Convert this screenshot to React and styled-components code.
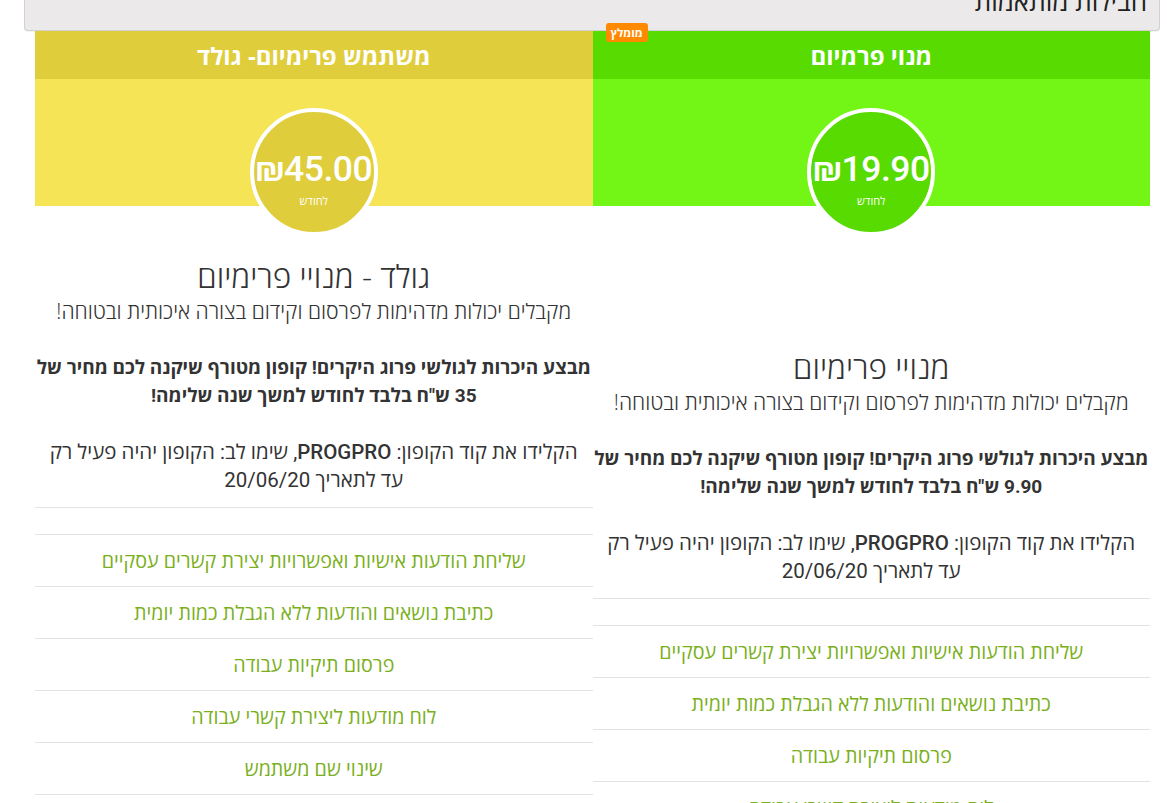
import React from "react";
import styled, { createGlobalStyle } from "styled-components";

const GlobalStyle = createGlobalStyle`
  html, body {
    margin: 0;
    padding: 0;
    overflow: hidden;
    background: #ffffff;
  }
  body {
    font-family: Roboto, "Open Sans", "Liberation Sans", sans-serif;
    color: #333333;
  }
`;

const Page = styled.div`
  direction: rtl;
  width: 1136px;
  margin-left: 24px;
`;

const TopBar = styled.div`
  height: 30px;
  background: #ebe9ea;
  border: 1px solid #d2d0d1;
  border-top: none;
  border-radius: 0 0 4px 4px;
  display: flex;
  align-items: flex-end;
  padding: 0 12px;
  overflow: hidden;
  box-shadow: 0 1px 1px rgba(0, 0, 0, 0.05);
`;

const PageTitle = styled.h2`
  margin: 0 0 17px;
  font-family: "Open Sans", sans-serif;
  font-weight: 400;
  font-size: 26px;
  line-height: 24px;
  color: #222;
  white-space: nowrap;
`;

const Columns = styled.div`
  display: flex;
  margin: 0 10px 0 11px;
`;

const Column = styled.div`
  flex: 1 1 0;
  min-width: 0;
  display: flex;
  flex-direction: column;
`;

const PlanHeader = styled.div`
  position: relative;
  height: 48px;
  background: ${(p) => p.$dark};
  color: #fff;
  display: flex;
  align-items: center;
  justify-content: center;
  font-family: "Open Sans", sans-serif;
  font-weight: 700;
  font-size: 24px;
`;

const Badge = styled.span`
  position: absolute;
  top: -8px;
  left: 13px;
  height: 19px;
  padding: 0 5px;
  display: flex;
  align-items: center;
  background: #ff8a00;
  color: #fff;
  border-radius: 3px;
  font-family: "Open Sans", sans-serif;
  font-weight: 700;
  font-size: 11.5px;
`;

const Band = styled.div`
  height: 127px;
  box-sizing: border-box;
  padding-top: 29px;
  background: ${(p) => p.$light};
  display: flex;
  justify-content: center;
  align-items: flex-start;
`;

const Circle = styled.div`
  flex-shrink: 0;
  width: 120px;
  height: 83px;
  padding-top: 37px;
  box-sizing: content-box;
  border: 4px solid #fff;
  border-radius: 50%;
  background: ${(p) => p.$dark};
  display: flex;
  flex-direction: column;
  align-items: center;
  color: #fff;
  position: relative;
  z-index: 1;
`;

const Price = styled.div`
  direction: ltr;
  font-family: Roboto, "Open Sans", sans-serif;
  font-weight: 500;
  font-size: 35.5px;
  line-height: 40px;
  letter-spacing: -0.5px;
  white-space: nowrap;
`;

const Per = styled.div`
  font-family: "Open Sans", sans-serif;
  font-size: 11px;
  line-height: 14px;
  margin-top: 5px;
`;

const Body = styled.div`
  padding-top: ${(p) => p.$offset}px;
  text-align: center;
`;

const PlanTitle = styled.h3`
  margin: 0;
  font-family: "Open Sans", sans-serif;
  font-weight: 300;
  font-size: 31.5px;
  line-height: 36px;
  color: #333;
`;

const Lead = styled.p`
  margin: 3px 0 0;
  font-family: "Open Sans", sans-serif;
  font-weight: 300;
  font-size: 21.2px;
  line-height: 28px;
  color: #333;
`;

const Offer = styled.p`
  margin: 29px 0 0;
  font-family: Roboto, "Open Sans", sans-serif;
  font-weight: 700;
  font-size: 19px;
  line-height: 28px;
  color: #333;
  white-space: nowrap;
`;

const Coupon = styled.p`
  margin: 28px 0 0;
  font-family: Roboto, "Open Sans", sans-serif;
  font-weight: 400;
  font-size: 20.5px;
  line-height: 28px;
  color: #333;
  white-space: nowrap;
`;

const Code = styled.strong`
  font-weight: 500;
`;

const Features = styled.ul`
  list-style: none;
  margin: 13px 0 0;
  padding: 0;
  border-top: 1px solid #e3e3e3;
`;

const Spacer = styled.li`
  height: 26px;
  border-bottom: 1px solid #e3e3e3;
`;

const Feature = styled.li`
  height: 51px;
  border-bottom: 1px solid #e3e3e3;
  display: flex;
  align-items: center;
  justify-content: center;
  font-family: "Open Sans", sans-serif;
  font-size: 19.7px;
  color: #7aaf20;
`;

const features = [
  "שליחת הודעות אישיות ואפשרויות יצירת קשרים עסקיים",
  "כתיבת נושאים והודעות ללא הגבלת כמות יומית",
  "פרסום תיקיות עבודה",
  "לוח מודעות ליצירת קשרי עבודה",
  "שינוי שם משתמש",
];

const plans = [
  {
    name: "מנוי פרמיום",
    recommended: true,
    dark: "#57db00",
    light: "#73f516",
    price: "₪19.90",
    title: "מנויי פרימיום",
    offerPrice: "9.90",
    offset: 143,
  },
  {
    name: "משתמש פרימיום- גולד",
    recommended: false,
    dark: "#dfcd3b",
    light: "#f5e456",
    price: "₪45.00",
    title: "גולד - מנויי פרימיום",
    offerPrice: "35",
    offset: 52,
  },
];

function Plan({ plan }) {
  return (
    <Column>
      <PlanHeader $dark={plan.dark}>
        {plan.recommended && <Badge>מומלץ</Badge>}
        {plan.name}
      </PlanHeader>
      <Band $light={plan.light}>
        <Circle $dark={plan.dark}>
          <Price>{plan.price}</Price>
          <Per>לחודש</Per>
        </Circle>
      </Band>
      <Body $offset={plan.offset}>
        <PlanTitle>{plan.title}</PlanTitle>
        <Lead>מקבלים יכולות מדהימות לפרסום וקידום בצורה איכותית ובטוחה!</Lead>
        <Offer>
          מבצע היכרות לגולשי פרוג היקרים! קופון מטורף שיקנה לכם מחיר של
          <br />
          {plan.offerPrice} ש"ח בלבד לחודש למשך שנה שלימה!
        </Offer>
        <Coupon>
          הקלידו את קוד הקופון: <Code>PROGPRO</Code>, שימו לב: הקופון יהיה פעיל רק
          <br />
          עד לתאריך 20/06/20
        </Coupon>
        <Features>
          <Spacer />
          {features.map((f) => (
            <Feature key={f}>{f}</Feature>
          ))}
        </Features>
      </Body>
    </Column>
  );
}

export default function App() {
  return (
    <>
      <GlobalStyle />
      <Page>
        <TopBar>
          <PageTitle>חבילות מותאמות</PageTitle>
        </TopBar>
        <Columns>
          {plans.map((p) => (
            <Plan key={p.name} plan={p} />
          ))}
        </Columns>
      </Page>
    </>
  );
}
